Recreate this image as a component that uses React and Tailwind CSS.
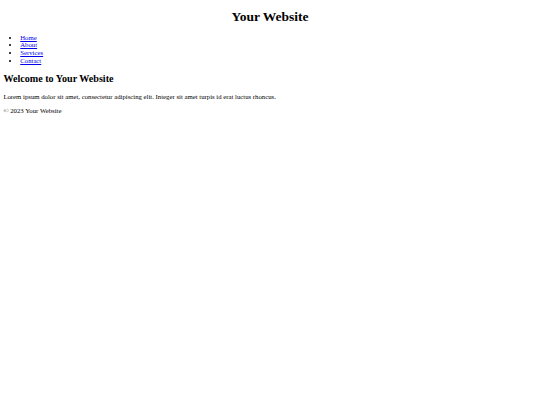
export default function App() {
  return (
    <div className="px-[3.375px] pt-[9px] font-['Liberation_Serif',serif] text-[6.75px] leading-[7.76px] text-black bg-white">
      <header>
        <h1 className="m-0 text-center text-[13.5px] font-bold leading-[15.5px]">Your Website</h1>
        <nav>
          <ul className="mt-[9px] list-disc pl-[16.875px]">
            <li><a href="#" className="text-[#0000ee] underline">Home</a></li>
            <li><a href="#" className="text-[#0000ee] underline">About</a></li>
            <li><a href="#" className="text-[#0000ee] underline">Services</a></li>
            <li><a href="#" className="text-[#0000ee] underline">Contact</a></li>
          </ul>
        </nav>
      </header>
      <main>
        <h2 className="mt-[8.4px] text-[10.125px] font-bold leading-[11.6px]">Welcome to Your Website</h2>
        <p className="mt-[8.4px]">Lorem ipsum dolor sit amet, consectetur adipiscing elit. Integer sit amet turpis id erat luctus rhoncus.</p>
      </main>
      <footer>
        <p className="mt-[6.75px]">© 2023 Your Website</p>
      </footer>
    </div>
  );
}
